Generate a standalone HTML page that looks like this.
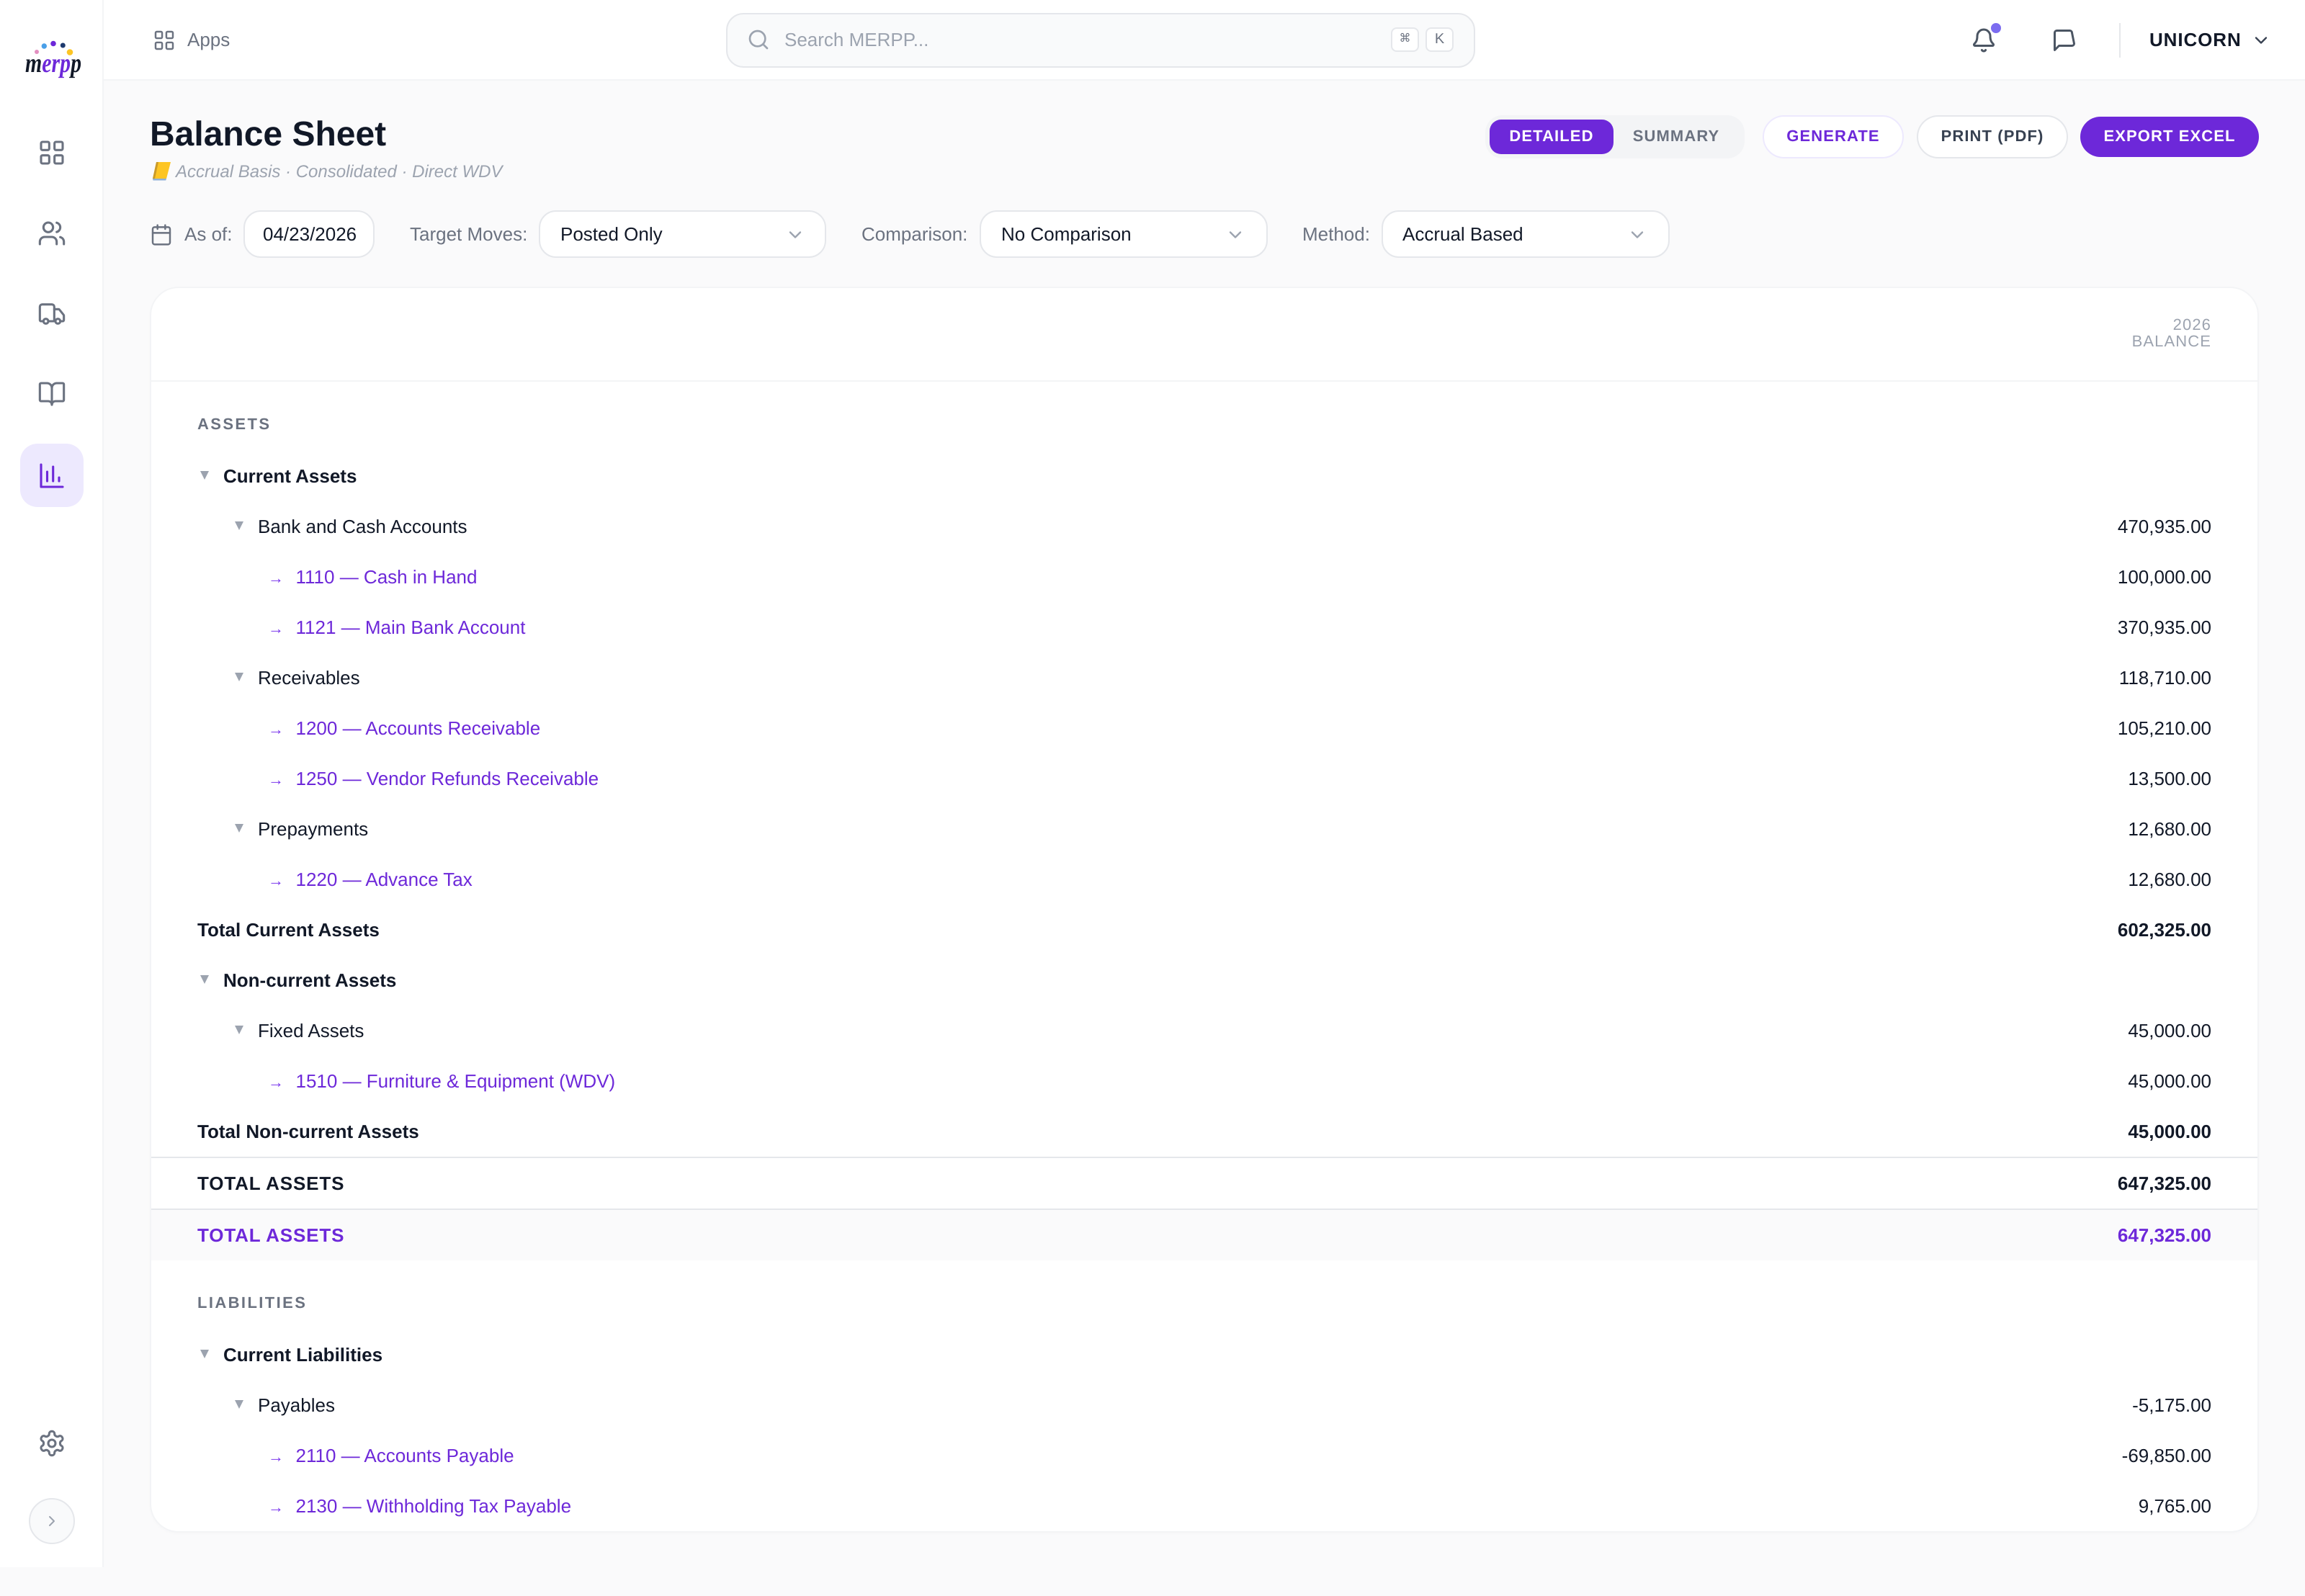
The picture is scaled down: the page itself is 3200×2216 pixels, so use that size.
<!DOCTYPE html>
<html lang="en"><head><meta charset="utf-8"><title>Balance Sheet</title>
<style>
*{box-sizing:border-box;margin:0;padding:0}
html,body{width:3200px;height:2216px;overflow:hidden;background:#fafafb;font-family:"Liberation Sans",sans-serif;color:#111827;text-rendering:geometricPrecision}
.p{position:absolute}
svg{position:absolute;fill:none;stroke-linecap:round;stroke-linejoin:round}
.i{stroke:#6b7280;stroke-width:1.850}
.t{position:absolute;white-space:nowrap;font-size:26px;line-height:70px;height:70px;margin-top:-1px}
.b{font-weight:700}
.a{right:130px;text-align:right}
.lk{color:#6d28d9}
.ar{position:absolute;white-space:nowrap;font-size:22px;line-height:70px;height:70px;left:372px;color:#7c3aed;margin-top:1px}
.c{position:absolute;width:12px;height:12px;background:#9ca3af;clip-path:polygon(0 0,100% 0,50% 100%)}
.lab{position:absolute;white-space:nowrap;font-size:26px;line-height:40px;top:305px;color:#6b7280}
.box{position:absolute;top:292px;height:66px;background:#fff;border:2px solid #e5e7eb;border-radius:24px;font-size:26px;line-height:62px;white-space:nowrap;color:#111827}
.btn{position:absolute;font-size:22px;font-weight:700;letter-spacing:1.1px;text-align:center;white-space:nowrap}
.sec{position:absolute;left:274px;font-size:22px;font-weight:700;letter-spacing:2.4px;color:#6b7280;line-height:30px;white-space:nowrap}
</style></head><body>

<!-- sidebar -->
<div class="p" style="left:0;top:0;width:144px;height:2176px;background:#fff;border-right:2px solid #f3f4f6"></div>
<svg style="left:20px;top:45px" width="104" height="75" viewBox="20 45 104 75">
<circle cx="51" cy="72" r="3" fill="#e38fc0"/><circle cx="61.300" cy="64" r="3.700" fill="#4a9fe8"/><circle cx="74" cy="60.500" r="3.800" fill="#6d28d9"/><circle cx="87.300" cy="63" r="3.500" fill="#1e3a6e"/><circle cx="97" cy="72.500" r="4.300" fill="#fdc524"/>
<text x="35" y="100" font-family="Liberation Serif" font-style="italic" font-weight="700" font-size="38" textLength="78" lengthAdjust="spacingAndGlyphs" fill="#111827" stroke="none">m<tspan fill="#6d28d9">erp</tspan>p</text>
</svg>
<svg class="i" style="left:52px;top:192px" width="40" height="40" viewBox="0 0 24 24"><rect x="3" y="3" width="6.800" height="6.800" rx="1.200"/><rect x="14.200" y="3" width="6.800" height="6.800" rx="1.200"/><rect x="3" y="14.200" width="6.800" height="6.800" rx="1.200"/><rect x="14.200" y="14.200" width="6.800" height="6.800" rx="1.200"/></svg>
<svg class="i" style="left:52px;top:304px" width="40" height="40" viewBox="0 0 24 24"><path d="M16 21v-2a4 4 0 0 0-4-4H6a4 4 0 0 0-4 4v2"/><path d="M16 3.128a4 4 0 0 1 0 7.744"/><path d="M22 21v-2a4 4 0 0 0-3-3.870"/><circle cx="9" cy="7" r="4"/></svg>
<svg class="i" style="left:52px;top:416px" width="40" height="40" viewBox="0 0 24 24"><path d="M14 18V6a2 2 0 0 0-2-2H4a2 2 0 0 0-2 2v11a1 1 0 0 0 1 1h2"/><path d="M15 18H9"/><path d="M19 18h2a1 1 0 0 0 1-1v-3.650a1 1 0 0 0-.220-.624l-3.480-4.350A1 1 0 0 0 17.520 8H14"/><circle cx="17" cy="18" r="2"/><circle cx="7" cy="18" r="2"/></svg>
<svg class="i" style="left:52px;top:527px" width="40" height="40" viewBox="0 0 24 24"><path d="M12 7v14"/><path d="M3 18a1 1 0 0 1-1-1V4a1 1 0 0 1 1-1h5a4 4 0 0 1 4 4 4 4 0 0 1 4-4h5a1 1 0 0 1 1 1v13a1 1 0 0 1-1 1h-6a3 3 0 0 0-3 3 3 3 0 0 0-3-3z"/></svg>
<div class="p" style="left:28px;top:616px;width:88px;height:88px;background:#ede9fe;border-radius:24px"></div>
<svg style="left:50px;top:638px;stroke:#6d28d9;stroke-width:3.100" width="44" height="44" viewBox="50 638 44 44"><path d="M57 645V676H87"/><path d="M65.500 655V668"/><path d="M73.700 648V668"/><path d="M82 663V668"/></svg>
<svg class="i" style="left:52px;top:1984px" width="40" height="40" viewBox="0 0 24 24"><path d="M12.220 2h-.440a2 2 0 0 0-2 2v.180a2 2 0 0 1-1 1.730l-.430.250a2 2 0 0 1-2 0l-.150-.080a2 2 0 0 0-2.730.730l-.220.380a2 2 0 0 0 .730 2.730l.150.100a2 2 0 0 1 1 1.720v.510a2 2 0 0 1-1 1.740l-.150.090a2 2 0 0 0-.730 2.730l.220.380a2 2 0 0 0 2.730.730l.150-.080a2 2 0 0 1 2 0l.430.250a2 2 0 0 1 1 1.730V20a2 2 0 0 0 2 2h.440a2 2 0 0 0 2-2v-.180a2 2 0 0 1 1-1.730l.430-.250a2 2 0 0 1 2 0l.150.080a2 2 0 0 0 2.730-.730l.220-.390a2 2 0 0 0-.730-2.730l-.150-.080a2 2 0 0 1-1-1.740v-.500a2 2 0 0 1 1-1.740l.150-.090a2 2 0 0 0 .730-2.730l-.220-.380a2 2 0 0 0-2.730-.730l-.150.080a2 2 0 0 1-2 0l-.430-.250a2 2 0 0 1-1-1.730V4a2 2 0 0 0-2-2z"/><circle cx="12" cy="12" r="3"/></svg>
<div class="p" style="left:40px;top:2080px;width:64px;height:64px;border-radius:50%;background:#f9fafb;border:2px solid #e5e7eb"></div>
<svg style="left:60px;top:2100px;stroke:#9ca3af;stroke-width:2" width="24" height="24" viewBox="0 0 24 24"><path d="m9 18 6-6-6-6"/></svg>

<!-- header -->
<div class="p" style="left:144px;top:0;width:3056px;height:112px;background:#fff;border-bottom:2px solid #f3f4f6"></div>
<svg class="i" style="left:212px;top:40px" width="32" height="32" viewBox="0 0 24 24"><rect x="3" y="3" width="6.800" height="6.800" rx="1.200"/><rect x="14.200" y="3" width="6.800" height="6.800" rx="1.200"/><rect x="3" y="14.200" width="6.800" height="6.800" rx="1.200"/><rect x="14.200" y="14.200" width="6.800" height="6.800" rx="1.200"/></svg>
<div class="p" style="left:260px;top:35px;font-size:26px;line-height:40px;color:#6b7280">Apps</div>
<div class="p" style="left:1008px;top:18px;width:1040px;height:76px;background:#f9fafb;border:2px solid #e5e7eb;border-radius:24px"></div>
<svg style="left:1037px;top:39px;stroke:#9ca3af;stroke-width:2" width="32" height="32" viewBox="0 0 24 24"><circle cx="11" cy="11" r="8"/><path d="m21 21-4.300-4.300"/></svg>
<div class="p" style="left:1089px;top:35px;font-size:26px;line-height:40px;color:#9ca3af;white-space:nowrap">Search MERPP...</div>
<div class="p" style="left:1931px;top:38px;width:39px;height:34px;background:#fff;border:2px solid #e5e7eb;border-radius:8px;font-size:16px;line-height:28px;text-align:center;color:#6b7280;font-family:'Liberation Sans','DejaVu Sans',sans-serif">⌘</div>
<div class="p" style="left:1979px;top:38px;width:39px;height:34px;background:#fff;border:2px solid #e5e7eb;border-radius:8px;font-size:20px;line-height:28px;text-align:center;color:#6b7280">K</div>
<svg style="left:2736px;top:38px;stroke:#4b5563;stroke-width:2" width="36" height="36" viewBox="0 0 24 24"><path d="M10.268 21a2 2 0 0 0 3.464 0"/><path d="M3.262 15.326A1 1 0 0 0 4 17h16a1 1 0 0 0 .740-1.673C19.410 13.956 18 12.499 18 8A6 6 0 0 0 6 8c0 4.499-1.411 5.956-2.738 7.326"/></svg>
<div class="p" style="left:2764px;top:32px;width:14px;height:14px;border-radius:50%;background:#7c6cf0"></div>
<svg style="left:2848px;top:38px;stroke:#4b5563;stroke-width:2" width="36" height="36" viewBox="0 0 24 24"><path d="M21 15a2 2 0 0 1-2 2H7l-4 4V5a2 2 0 0 1 2-2h12a2 2 0 0 1 2 2z"/></svg>
<div class="p" style="left:2942px;top:32px;width:2px;height:48px;background:#e5e7eb"></div>
<div class="p b" style="left:2984px;top:35px;font-size:26px;line-height:40px;letter-spacing:.9px;color:#111827">UNICORN</div>
<svg style="left:3124.500px;top:42px;stroke:#374151;stroke-width:2" width="28" height="28" viewBox="0 0 24 24"><path d="m6 9 6 6 6-6"/></svg>

<!-- title -->
<div class="p b" style="left:208px;top:158px;font-size:48px;line-height:58px;color:#111827;white-space:nowrap">Balance Sheet</div>
<svg style="left:210px;top:223px;stroke:none" width="30" height="30" viewBox="0 0 30 30"><path d="M7 2H27L21 25H2z" fill="#fdc524"/><path d="M7 2 2 25h3L10 2z" fill="#c99a2a"/><path d="M2 25h19l-.8 2.500H2.500z" fill="#8fb0d8"/></svg>
<div class="p" style="left:244px;top:219px;font-size:24px;line-height:40px;font-style:italic;color:#9ca3af;white-space:nowrap">Accrual Basis · Consolidated · Direct WDV</div>

<!-- actions -->
<div class="p" style="left:2062px;top:160px;width:360px;height:60px;background:#f3f4f6;border-radius:24px"></div>
<div class="btn" style="left:2068px;top:166px;width:172px;height:48px;background:#6d28d9;border-radius:16px;color:#fff;line-height:46px">DETAILED</div>
<div class="btn" style="left:2240px;top:166px;width:174px;height:48px;color:#6b7280;line-height:46px">SUMMARY</div>
<div class="btn" style="left:2447px;top:160px;width:196px;height:60px;background:#fff;border:2px solid #ede9fe;border-radius:30px;color:#6d28d9;line-height:53px">GENERATE</div>
<div class="btn" style="left:2661px;top:160px;width:210px;height:60px;background:#fff;border:2px solid #e5e7eb;border-radius:30px;color:#374151;line-height:53px">PRINT (PDF)</div>
<div class="btn" style="left:2888px;top:162px;width:248px;height:56px;background:#6d28d9;border-radius:28px;color:#fff;line-height:53px">EXPORT EXCEL</div>

<!-- filters -->
<svg class="i" style="left:208px;top:310px" width="32" height="32" viewBox="0 0 24 24"><path d="M8 2v4"/><path d="M16 2v4"/><rect x="3" y="4" width="18" height="18" rx="2"/><path d="M3 10h18"/></svg>
<div class="lab" style="left:256px">As of:</div>
<div class="box" style="left:338px;width:182px;padding-left:25px">04/23/2026</div>
<div class="lab" style="left:569px">Target Moves:</div>
<div class="box" style="left:748px;width:399px;padding-left:28px">Posted Only</div>
<svg style="left:1090px;top:312px;stroke:#9ca3af;stroke-width:2" width="28" height="28" viewBox="0 0 24 24"><path d="m6 9 6 6 6-6"/></svg>
<div class="lab" style="left:1196px">Comparison:</div>
<div class="box" style="left:1360px;width:400px;padding-left:28px">No Comparison</div>
<svg style="left:1701px;top:312px;stroke:#9ca3af;stroke-width:2" width="28" height="28" viewBox="0 0 24 24"><path d="m6 9 6 6 6-6"/></svg>
<div class="lab" style="left:1808px">Method:</div>
<div class="box" style="left:1918px;width:400px;padding-left:27px">Accrual Based</div>
<svg style="left:2259px;top:312px;stroke:#9ca3af;stroke-width:2" width="28" height="28" viewBox="0 0 24 24"><path d="m6 9 6 6 6-6"/></svg>

<!-- card -->
<div class="p" style="left:208px;top:398px;width:2928px;height:1730px;background:#fff;border:2px solid #f3f4f6;border-radius:40px;box-shadow:0 2px 4px rgba(0,0,0,.015)"></div>
<div class="p" style="left:210px;top:528px;width:2924px;height:2px;background:#f3f4f6"></div>
<div class="p" style="right:131px;top:439px;font-size:22px;line-height:23px;letter-spacing:1.1px;color:#9ca3af;text-align:right;margin-right:-1px">2026<br>BALANCE</div>

<div class="sec" style="top:574px">ASSETS</div>

<div class="c" style="left:278px;top:654px"></div><div class="t b" style="left:310px;top:627px">Current Assets</div>

<div class="c" style="left:326px;top:724px"></div><div class="t" style="left:358px;top:697px">Bank and Cash Accounts</div><div class="t a" style="top:697px">470,935.00</div>
<div class="ar" style="top:767px">→</div><div class="t lk" style="left:410.500px;top:767px">1110 — Cash in Hand</div><div class="t a" style="top:767px">100,000.00</div>
<div class="ar" style="top:837px">→</div><div class="t lk" style="left:410.500px;top:837px">1121 — Main Bank Account</div><div class="t a" style="top:837px">370,935.00</div>

<div class="c" style="left:326px;top:934px"></div><div class="t" style="left:358px;top:907px">Receivables</div><div class="t a" style="top:907px">118,710.00</div>
<div class="ar" style="top:977px">→</div><div class="t lk" style="left:410.500px;top:977px">1200 — Accounts Receivable</div><div class="t a" style="top:977px">105,210.00</div>
<div class="ar" style="top:1047px">→</div><div class="t lk" style="left:410.500px;top:1047px">1250 — Vendor Refunds Receivable</div><div class="t a" style="top:1047px">13,500.00</div>

<div class="c" style="left:326px;top:1144px"></div><div class="t" style="left:358px;top:1117px">Prepayments</div><div class="t a" style="top:1117px">12,680.00</div>
<div class="ar" style="top:1187px">→</div><div class="t lk" style="left:410.500px;top:1187px">1220 — Advance Tax</div><div class="t a" style="top:1187px">12,680.00</div>

<div class="t b" style="left:274px;top:1257px">Total Current Assets</div><div class="t a b" style="top:1257px">602,325.00</div>

<div class="c" style="left:278px;top:1354px"></div><div class="t b" style="left:310px;top:1327px">Non-current Assets</div>

<div class="c" style="left:326px;top:1424px"></div><div class="t" style="left:358px;top:1397px">Fixed Assets</div><div class="t a" style="top:1397px">45,000.00</div>
<div class="ar" style="top:1467px">→</div><div class="t lk" style="left:410.500px;top:1467px">1510 — Furniture &amp; Equipment (WDV)</div><div class="t a" style="top:1467px">45,000.00</div>

<div class="t b" style="left:274px;top:1537px">Total Non-current Assets</div><div class="t a b" style="top:1537px">45,000.00</div>

<div class="p" style="left:210px;top:1606px;width:2924px;height:2px;background:#e5e7eb"></div>
<div class="t b" style="left:274px;top:1609px;letter-spacing:.85px">TOTAL ASSETS</div><div class="t a b" style="top:1609px">647,325.00</div>
<div class="p" style="left:210px;top:1678px;width:2924px;height:72px;background:#fafafb;border-top:2px solid #e5e7eb"></div>
<div class="t b lk" style="left:274px;top:1681px;letter-spacing:.85px">TOTAL ASSETS</div><div class="t a b lk" style="top:1681px">647,325.00</div>

<div class="sec" style="top:1794px">LIABILITIES</div>

<div class="c" style="left:278px;top:1874px"></div><div class="t b" style="left:310px;top:1847px">Current Liabilities</div>
<div class="c" style="left:326px;top:1944px"></div><div class="t" style="left:358px;top:1917px">Payables</div><div class="t a" style="top:1917px">-5,175.00</div>
<div class="ar" style="top:1987px">→</div><div class="t lk" style="left:410.500px;top:1987px">2110 — Accounts Payable</div><div class="t a" style="top:1987px">-69,850.00</div>
<div class="ar" style="top:2057px">→</div><div class="t lk" style="left:410.500px;top:2057px">2130 — Withholding Tax Payable</div><div class="t a" style="top:2057px">9,765.00</div>

</body></html>
